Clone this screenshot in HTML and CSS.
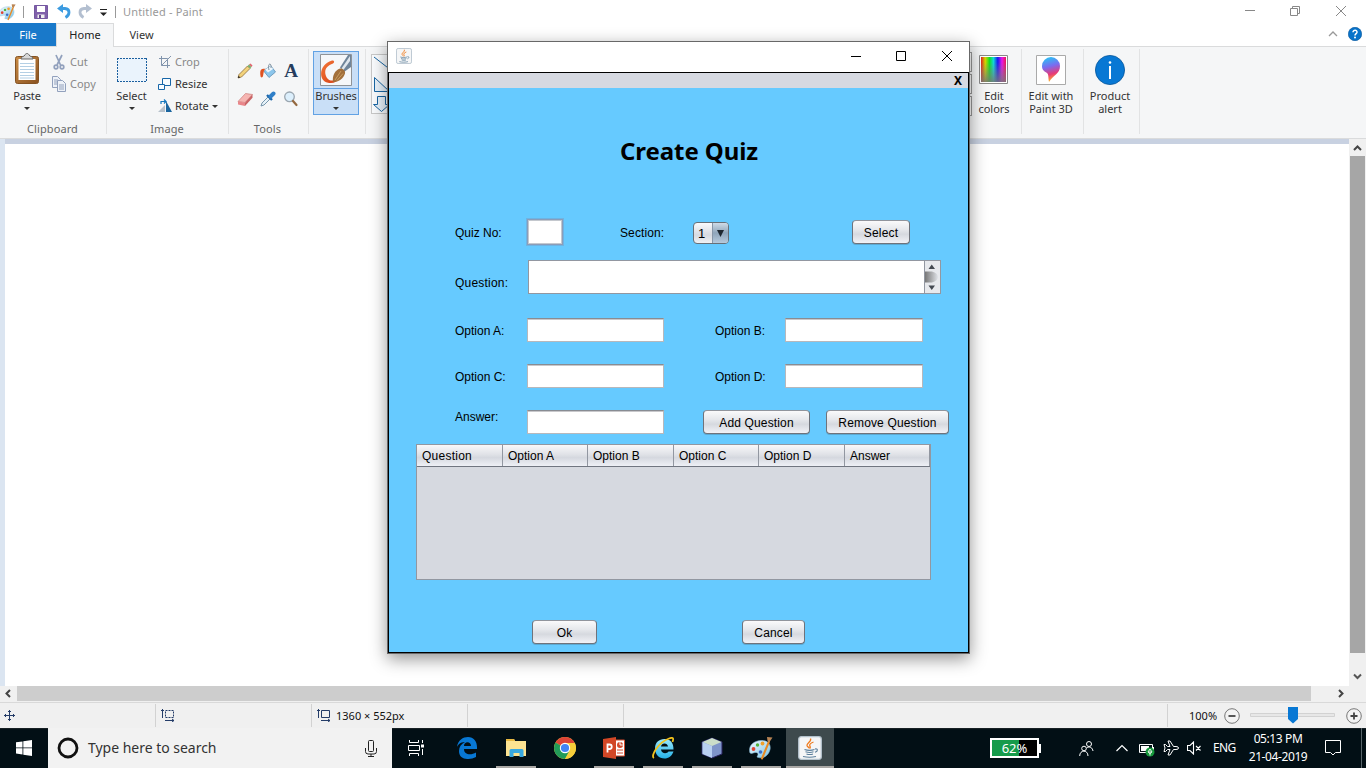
FILE: index.html
```html
<!DOCTYPE html>
<html lang="en">
<head>
<meta charset="utf-8">
<title>Untitled - Paint</title>
<link rel="stylesheet" href="styles.css">
</head>
<body>
<svg width="0" height="0" class="defs">
  <defs>
    <linearGradient id="board" x1="0" y1="0" x2="1" y2="1"><stop offset="0" stop-color="#c98b45"/><stop offset="1" stop-color="#8a5220"/></linearGradient>
    <linearGradient id="hue"><stop offset="0" stop-color="#e02020"/><stop offset=".17" stop-color="#d8d800"/><stop offset=".34" stop-color="#10e020"/><stop offset=".5" stop-color="#10d8d8"/><stop offset=".67" stop-color="#1818f0"/><stop offset=".84" stop-color="#e818e8"/><stop offset="1" stop-color="#e81850"/></linearGradient>
    <linearGradient id="fade" x1="0" y1="0" x2="0" y2="1"><stop offset=".2" stop-color="#808080" stop-opacity="0"/><stop offset="1" stop-color="#777" stop-opacity=".85"/></linearGradient>
    <linearGradient id="pin" x1=".3" y1="0" x2=".5" y2="1"><stop offset="0" stop-color="#27c5f5"/><stop offset=".38" stop-color="#7a6cf0"/><stop offset=".7" stop-color="#e83a78"/><stop offset="1" stop-color="#ffc020"/></linearGradient>
    <linearGradient id="paintred" x1="0" y1="0" x2="1" y2="1"><stop offset="0" stop-color="#f47a3a"/><stop offset="1" stop-color="#d43c12"/></linearGradient>
    <linearGradient id="sky" x1="0" y1="0" x2="1" y2="1"><stop offset="0" stop-color="#f2faff"/><stop offset="1" stop-color="#7cc4e6"/></linearGradient>
    <linearGradient id="ie" x1="0" y1="0" x2="0" y2="1"><stop offset="0" stop-color="#9be8fb"/><stop offset="1" stop-color="#25b2e8"/></linearGradient>
    <symbol id="palette" viewBox="0 0 24 24">
      <path d="M1 17C-1 10 4 5 12 4.500c7-.5 10 4 9 9-2 8-9 9.500-13 7.500 2-3 1-5-2-4.500-2 .4-3 1.500-5 .5z" fill="url(#sky)" stroke="#8fc0dc" stroke-width=".6"/>
      <circle cx="4.500" cy="13" r="1.900" fill="#e04534"/><circle cx="8.500" cy="9" r="1.700" fill="#54b43c"/><circle cx="13.500" cy="7.500" r="1.900" fill="#f0a02c"/><circle cx="11.500" cy="16" r="1.800" fill="#3c6cc8"/>
      <path d="M20 5.500L13 22.500" stroke="#e98a24" stroke-width="2" stroke-linecap="round"/><path d="M18 1l5.500.500L20.500 6 18.500 5z" fill="#b98555"/>
    </symbol>
    <symbol id="java" viewBox="0 0 24 24">
      <rect x=".7" y=".7" width="22.600" height="22.600" rx="2.500" fill="#f5f6f7" stroke="#b4c2cc" stroke-width="1.300"/>
      <path d="M12.500 2.500c1.500 3-4 4.500-3.500 7 .3 1.200 2 2 2.500 3M15.500 6c-3 1-4.200 2.500-3.700 4 .8 1 .8 1.500.2 2.500" fill="none" stroke="#ef7b1e" stroke-width="1.300"/>
      <path d="M6.500 13.500c3 1 7 1 10 0M7.500 15.800c3 .9 5.500.9 8 0M8.500 18c2 .7 4.500.7 6.500 0M5 20.500c4 1 9 1 13 0M17 13c3-.6 3.300 2.200 0 3.300" fill="none" stroke="#5c7f9b" stroke-width="1.100"/>
    </symbol>
  </defs>
</svg>

<div class="paint">
  <header class="titlebar">
    <svg class="app-icon" width="17" height="18"><use href="#palette"/></svg>
    <i class="bar"></i>
    <svg class="save" width="14" height="14" viewBox="0 0 14 14"><path d="M.5.5h13v13H.5z" fill="#8060aa" stroke="#7457a0"/><path d="M3 1h8v6H3z" fill="#fff"/><path d="M3.500 9.500h7V13h-7z" fill="#eee"/><path d="M5 10h2v3H5z" fill="#62478e"/></svg>
    <svg class="undo" width="14" height="15" viewBox="0 0 14 15"><path d="M2.500 4.500H8c5.500.5 5 6.500.500 9" fill="none" stroke="#3c9be0" stroke-width="2.800"/><path d="M0 4.500L6 0v9z" fill="#3c9be0"/></svg>
    <svg class="redo" width="14" height="15" viewBox="0 0 14 15"><path d="M11.500 4.500H6C.500 5 1 11 5.500 13.500" fill="none" stroke="#b3bfd0" stroke-width="2.800"/><path d="M14 4.500L8 0v9z" fill="#b3bfd0"/></svg>
    <svg class="more" width="7" height="8" viewBox="0 0 7 8"><path d="M0 .5h7" stroke="#222"/><path d="M0 3.500h7L3.500 7z" fill="#222"/></svg>
    <i class="bar"></i>
    <span class="doc-title">Untitled - Paint</span>
    <svg class="controls" width="104" height="12" viewBox="0 0 104 12" fill="none" stroke="#888"><path d="M1 5.500h10M46.500 3.500h7v7h-7zM48.500 3.500v-2h7v7h-2M92 1l10 10M102 1L92 11"/></svg>
  </header>
  <nav class="tabs">
    <span class="tab file">File</span><span class="tab home">Home</span><span class="tab view">View</span>
    <svg class="collapse" width="10" height="6" viewBox="0 0 10 6"><path d="M1 5l4-4 4 4" fill="none" stroke="#999" stroke-width="1.300"/></svg>
    <svg class="help" width="14" height="14" viewBox="0 0 14 14"><circle cx="7" cy="7" r="6.700" fill="#0873ca" stroke="#045298" stroke-width=".6"/><path d="M5 5.300C5 2.500 9.200 2.700 9 5.200 8.900 6.600 7 6.800 7 8.500" fill="none" stroke="#fff" stroke-width="1.500"/><circle cx="7" cy="10.500" r="1" fill="#fff"/></svg>
  </nav>

  <section class="ribbon">
    <div class="group clipboard">
      <div class="tools-row">
        <div class="big paste">
          <svg width="26" height="32" viewBox="0 0 26 32"><rect x="1.500" y="3.500" width="23" height="27" rx="2" fill="url(#board)" stroke="#855323"/><path d="M4.500 6h17v21h-17z" fill="#fff"/><path d="M6 10.500h14M6 13.500h14M6 16.500h14M6 19.500h14M6 22.500h14M6 25h14" stroke="#b4cfe4"/><path d="M7 6c0-3 3-2 4-4 .5-2 3.500-2 4 0 1 2 4 1 4 4z" fill="#d8d8d8" stroke="#666"/></svg>
          <span>Paste</span><i class="drop"></i>
        </div>
        <div class="stack muted clip-stack">
          <div><svg width="16" height="16" viewBox="0 0 16 16" fill="none" stroke="#92a1bd" stroke-width="1.700"><path d="M5 1l4.500 10M11 1L6 11"/><circle cx="5" cy="13" r="1.800"/><circle cx="11" cy="13" r="1.800"/></svg><span>Cut</span></div>
          <div><svg width="16" height="16" viewBox="0 0 16 16" fill="#eef2f8" stroke="#92a1bd"><path d="M1.500.5h5l3 3v8h-8zM3 4h4M3 6h5M3 8h5"/><path d="M6.500 4.500h5l3 3v8h-8zM8 9h5M8 11h5M8 13h5"/></svg><span>Copy</span></div>
        </div>
      </div>
      <div class="group-label">Clipboard</div>
    </div>
    <div class="group image">
      <div class="tools-row">
        <div class="big select-tool">
          <svg width="30" height="32" viewBox="0 0 30 32"><rect x=".5" y="5.500" width="29" height="23" fill="#eaf3fc"/><path d="M0 5.500h30M0 28.500h30M.5 5v24M29.500 5v24" stroke="#1b5f9f" stroke-dasharray="2 1"/></svg>
          <span>Select</span><i class="drop"></i>
        </div>
        <div class="stack image-stack">
          <div class="muted"><svg width="14" height="14" viewBox="0 0 14 14" fill="none" stroke="#8295ad"><path d="M3.500 1v9.500H12M1 3.500h8.500V13M3.500 10.500L13 1"/></svg><span>Crop</span></div>
          <div><svg width="14" height="14" viewBox="0 0 14 14" fill="#f6fbff" stroke="#1766a8"><path d="M4.500 1.500h8v7h-8z"/><path d="M.5 7.500h6v5h-6z"/></svg><span>Resize</span></div>
          <div class="rotate"><svg width="15" height="14" viewBox="0 0 15 14"><path d="M0 13L7 6v7z" fill="#b7c1cb"/><path d="M8 2l6 11H8z" fill="#1a659f"/><path d="M3 5V2.500h4.500M6 .500l2 2-2 2" fill="none" stroke="#1477be" stroke-width="1.200"/></svg><span>Rotate</span><i class="drop side"></i></div>
        </div>
      </div>
      <div class="group-label">Image</div>
    </div>
    <div class="group tools">
      <div class="tool-grid">
        <svg viewBox="0 0 16 16"><path d="M1 15l1-3.500L10.500 3l2.500 2.500L4.500 14z" fill="#f2d27a" stroke="#8b6b3a" stroke-width=".8"/><path d="M12 1.500L13.500.500 15.500 2.500 14.500 4z" fill="#e2636c"/><path d="M10.500 3l1.500-1.500L14.500 4 13 5.500z" fill="#79b06c"/><path d="M1 15l.6-2.200L3.200 14.400z" fill="#222"/></svg>
        <svg viewBox="0 0 16 16"><path d="M5 6.500L11 3l4.500 6L9 14.500 4.500 9z" fill="#8cc6ec" stroke="#5f8fb4" stroke-width=".8"/><path d="M5 6.500L11 3l2 3-5 3.500z" fill="#eef7fd"/><path d="M9 7C7-.5 12-.5 11 5" fill="none" stroke="#5f7587" stroke-width=".8"/><path d="M.5 13C-.5 7 1 5 5.500 6 3 7 3.800 13 2.500 14 1.500 15 .5 14 .5 13z" fill="#df5322"/></svg>
        <span class="letter-a">A</span>
        <svg viewBox="0 0 16 16"><path d="M1 10.500L8.500 2.500 15.500 3.500 8 11.500z" fill="#f6b5b2" stroke="#cc7c7a" stroke-width=".7"/><path d="M1 10.500l7 1v3.500L1 13.500z" fill="#e9868a"/><path d="M8 11.500l7.500-8v3.200L8 15z" fill="#c96466"/></svg>
        <svg viewBox="0 0 16 16"><path d="M1 15l1-3 6-6 2 2-6 6z" fill="#e6f1f8" stroke="#6a8ca4" stroke-width=".9"/><path d="M7 4l5 5M9.500 6.500L13 3" stroke="#1a66ab" stroke-width="2.400"/><path d="M10.500 5.500L13.500 2.500" stroke="#2f7fc8" stroke-width="4" stroke-linecap="round"/></svg>
        <svg viewBox="0 0 16 16"><circle cx="6.500" cy="5.800" r="4.800" fill="#dceffc" stroke="#9aa6b0" stroke-width="1.300"/><path d="M10 10l3.500 4" stroke="#94683f" stroke-width="2.200" stroke-linecap="round"/></svg>
      </div>
      <div class="group-label">Tools</div>
    </div>
    <div class="group brushes">
      <div class="brush-button">
        <div class="brush-art"><svg width="32" height="32" viewBox="0 0 32 32"><path d="M.5.5h31v31H.5z" fill="#f5f7f9" stroke="#8f9397"/><path d="M12 6.500C-1 10-2 26 7 28.500c6 1.500 10-.5 12-3.500-6 2.500-10 2-12-1C3 17 6 12 13 9.500 15 8 14 6 12 6.500z" fill="url(#paintred)"/><path d="M20 13.500L28 1h3v12l-7 5z" fill="#6f859a"/><path d="M21.500 14.500L30 2v5l-7 9.500z" fill="#dfe7ee"/><path d="M13 28c-1-6 2-12 7-13.500 3 0 5.500 2 5 5-1.500 5-6.500 8.500-12 8.500z" fill="#a2703c"/><path d="M15 26l6-9M17 26.500l6-7" stroke="#c99e62"/></svg></div>
        <span>Brushes</span><i class="drop"></i>
      </div>
    </div>
    <div class="group shapes">
      <div class="shape-box"><svg width="48" height="60" viewBox="0 0 48 60" fill="#e7f2fb" stroke="#1866a4"><path d="M2 2l18 14M2.500 22.500v14h15zM5.500 41.500h8v8h4l-8 7-8-7h4z"/></svg></div>
    </div>
    <div class="group colors">
      <div class="swatches"><i></i><i></i><i></i></div>
      <div class="wide-button"><svg width="30" height="32" viewBox="0 0 30 32"><path d="M.5 1.500h28v28H.5z" fill="#fff" stroke="#888"/><path d="M2 3h25v25H2z" fill="url(#hue)"/><path d="M2 3h25v25H2z" fill="url(#fade)"/></svg><span>Edit<br>colors</span></div>
    </div>
    <div class="group three-d">
      <div class="wide-button"><svg width="30" height="32" viewBox="0 0 30 32"><path d="M.5 1.500h29v29H.5z" fill="#fff" stroke="#aaa"/><path d="M6 12a9 9 0 0 1 18 0c0 8-7 9-11 16-1-5 0-7-2-9-3-2-5-3-5-7z" fill="url(#pin)"/></svg><span>Edit with<br>Paint 3D</span></div>
    </div>
    <div class="group alert">
      <div class="wide-button"><svg width="30" height="32" viewBox="0 0 30 32"><circle cx="15" cy="16" r="14.600" fill="#0878d4" stroke="#06569b" stroke-width=".8"/><path d="M15 12v13" stroke="#fff" stroke-width="2"/><circle cx="15" cy="8.500" r="1.300" fill="#fff"/></svg><span>Product<br>alert</span></div>
    </div>
  </section>

  <main class="workspace">
    <div class="canvas"></div>
    <div class="vscroll"><svg width="16" height="17" viewBox="0 0 16 17"><path d="M4 11l3.500-3.500L11 11" fill="none" stroke="#444" stroke-width="2"/></svg><div class="vthumb"></div><svg width="16" height="17" viewBox="0 0 16 17"><path d="M4 7.500L7.500 11 11 7.500" fill="none" stroke="#555" stroke-width="2"/></svg></div>
  </main>
  <div class="hscroll"><svg width="17" height="16" viewBox="0 0 17 16"><path d="M10 4L6.500 7.500 10 11" fill="none" stroke="#444" stroke-width="2"/></svg><div class="hthumb"></div><svg width="17" height="16" viewBox="0 0 17 16"><path d="M8 4l3.500 3.500L8 11" fill="none" stroke="#444" stroke-width="2"/></svg></div>
  <footer class="status">
    <div class="cell"><svg width="11" height="11" viewBox="0 0 11 11" fill="none" stroke="#243c68"><path d="M5.500 0v11M0 5.500h11M4 2l1.500-1.500L7 2M4 9l1.500 1.500L7 9M2 4L.5 5.500 2 7M9 4l1.500 1.500L9 7"/></svg></div>
    <div class="cell"><svg width="14" height="13" viewBox="0 0 14 13" fill="none" stroke="#243c68"><path d="M4.500 1.500h8v7h-8z" stroke-dasharray="2 1"/><path d="M1.500 0v9M0 2L1.500.5 3 2M4 11.500h9M11 10l2 1.500-2 1.500"/></svg></div>
    <div class="cell"><svg width="14" height="13" viewBox="0 0 14 13" fill="none" stroke="#243c68"><path d="M4.500 1.500h8v7h-8z"/><path d="M1.500 0v9M0 2L1.500.5 3 2M4 11.500h9M11 10l2 1.500-2 1.500"/></svg><span>1360 × 552px</span></div>
    <div class="cell"></div>
    <div class="cell rest"></div>
    <div class="zoom"><span>100%</span><svg width="16" height="16" viewBox="0 0 16 16"><circle cx="8" cy="8" r="7.300" fill="#f3f3f3" stroke="#777"/><path d="M4.500 8h7" stroke="#444" stroke-width="1.800"/></svg>
      <svg class="slider" width="86" height="17" viewBox="0 0 86 17"><path d="M.5 6.500h84v3H.5z" fill="#e7e7e7" stroke="#d2d2d2"/><path d="M38 0h10v12l-5 4.500-5-4.500z" fill="#0878d4"/></svg>
      <svg width="16" height="16" viewBox="0 0 16 16"><circle cx="8" cy="8" r="7.300" fill="#f3f3f3" stroke="#777"/><path d="M4.500 8h7M8 4.500v7" stroke="#444" stroke-width="1.800"/></svg></div>
  </footer>
</div>

<div class="dialog">
  <div class="dialog-title"><svg width="16" height="16"><use href="#java"/></svg><svg width="102" height="12" viewBox="0 0 102 12" fill="none" stroke="#000"><path d="M1 6.500h10M46.500 1.500h9v9h-9zM92 1l10 10M102 1L92 11"/></svg></div>
  <div class="dialog-frame">
    <div class="menu-bar">X</div>
    <h1>Create Quiz</h1>
    <div class="row quiz-row"><label class="first">Quiz No:</label><div class="field small"></div><label class="section">Section:</label><div class="combo"><span>1</span><b><svg width="7" height="7" viewBox="0 0 7 7"><path d="M0 0h7L3.500 7z" fill="#1e2730"/></svg></b></div><button class="btn select-btn">Select</button></div>
    <div class="row question-row"><label class="first">Question:</label><div class="textarea"><svg width="16" height="32" viewBox="0 0 16 32"><defs><linearGradient id="thumb"><stop offset="0" stop-color="#777"/><stop offset="1" stop-color="#e0e3e8"/></linearGradient></defs><path d="M0 0h16v32H0z" fill="#e7e9ed"/><path d="M.5 0v32" stroke="#9297a1"/><path d="M1 10.500h7c4 1 6 3 6 5.500s-2 4.500-6 5.500H1z" fill="url(#thumb)"/><path d="M4.500 8h6.500L7.750 3.500zM4.500 24.500h6.500L7.750 29z" fill="#444a52"/></svg></div></div>
    <div class="row option-row"><label class="first">Option A:</label><div class="field"></div><label class="second">Option B:</label><div class="field wide"></div></div>
    <div class="row option-row next"><label class="first">Option C:</label><div class="field"></div><label class="second">Option D:</label><div class="field wide"></div></div>
    <div class="row answer-row"><label class="first">Answer:</label><div class="field"></div><button class="btn add">Add Question</button><button class="btn remove">Remove Question</button></div>
    <div class="table"><div class="thead"><span>Question</span><span>Option A</span><span>Option B</span><span>Option C</span><span>Option D</span><span>Answer</span></div></div>
    <div class="actions"><button class="btn ok">Ok</button><button class="btn cancel">Cancel</button></div>
  </div>
</div>

<div class="taskbar">
  <div class="start"><svg width="16" height="16" viewBox="0 0 16 16" fill="#fff"><path d="M0 2.300L6.500 1.400v6.100H0zM7.300 1.300L16 0v7.500H7.300zM0 8.300h6.500v6.200L0 13.600zM7.300 8.300H16V16l-8.700-1.300z"/></svg></div>
  <div class="search"><svg width="22" height="22" viewBox="0 0 22 22"><circle cx="11" cy="11" r="9" fill="none" stroke="#111" stroke-width="2.800"/></svg><span>Type here to search</span><svg width="12" height="17" viewBox="0 0 12 17" fill="none" stroke="#222"><rect x="3.500" y=".5" width="5" height="11" rx="1"/><path d="M.5 8v3.500q0 2.500 2.500 2.500h6q2.500 0 2.500-2.500V8M6 14v2.500M3 16.500h6"/></svg></div>
  <div class="apps">
    <div class="app taskview"><svg width="17" height="16" viewBox="0 0 17 16" fill="none" stroke="#fff"><path d="M1.500 0v2.500h9V0M.5 5.500h11v5H.5zM1.500 16v-2.500h9V16M14.500 0v3M14.500 9v6"/><path d="M13 4.500h3v3h-3z" fill="#fff" stroke="none"/></svg></div>
    <div class="app"><svg width="22" height="22" viewBox="0 0 22 22"><path d="M1 10C2 3 7 0 12 0c6 0 9.500 5 9 12H8c0 6 7 6.500 12 3.500V20C13 23.500 3 23 3 14c0-4 2-7 6-9-5 0-7 3-8 5zm7-1h7c0-5-7-5-7 0z" fill="#0878d4"/></svg></div>
    <div class="app open"><svg width="22" height="20" viewBox="0 0 22 20"><path d="M1 1h8l1 2h11v15H1z" fill="#fce391"/><path d="M1 1h8l1 2H1z" fill="#e9ba43"/><path d="M4.500 19v-6.500q0-1.500 1.500-1.500h11q1.500 0 1.500 1.500V19h-4v-4h-6v4z" fill="#38a8df"/></svg></div>
    <div class="app"><svg width="22" height="22" viewBox="0 0 22 22"><circle cx="11" cy="11" r="11" fill="#f7ce3a"/><path d="M11 11L1.500 5.500a11 11 0 0 1 19 0z" fill="#dc4437"/><path d="M1.500 5.500A11 11 0 0 0 11 22l4.500-8.500L11 11z" fill="#229b58"/><path d="M11 6h9.800A11 11 0 0 1 11 22l5-8z" fill="#f7ce3a"/><circle cx="11" cy="11" r="5.200" fill="#fff"/><circle cx="11" cy="11" r="4.100" fill="#4284f4"/></svg></div>
    <div class="app open"><svg width="22" height="22" viewBox="0 0 22 22"><path d="M12 3h9.500v16H12z" fill="#fff" stroke="#d24b2c"/><path d="M14 13h6M14 16h6" stroke="#d24b2c"/><circle cx="17" cy="8" r="3" fill="#d24b2c"/><path d="M17 8V4.500M17 8h3.500" stroke="#fff"/><path d="M0 2l13-2v22L0 20z" fill="#d24726"/><path d="M4.500 15.500V7.500h2c3 0 3 4.500 0 4.500h-2" fill="none" stroke="#fff" stroke-width="1.800"/></svg></div>
    <div class="app open"><svg width="23" height="22" viewBox="0 0 23 22"><path d="M3 11.500C3 5.500 7 2 12.500 2c6 0 9 4 9 10.500H9c.5 4.500 6 4.500 7.500 2h5c-1.500 4.500-5 7-9 7-5.500 0-9.500-4-9.500-10zM9 9.500h7c-.5-4-6.500-4-7 0z" fill="url(#ie)"/><path d="M2 21C-2 19 7 5 17 1.500 21 0 22 1 20.500 5" fill="none" stroke="#f2c21c" stroke-width="1.800"/></svg></div>
    <div class="app open"><svg width="22" height="22" viewBox="0 0 22 22"><path d="M11 1l10 4v12l-10 4-10-4V5z" fill="#7e94c9" stroke="#29235f"/><path d="M1.500 5L11 1l9.500 4L11 9z" fill="#cbddc9"/><path d="M1.500 5L11 9v12l-9.500-4z" fill="#b8cff0"/></svg></div>
    <div class="app open"><svg width="24" height="24"><use href="#palette"/></svg></div>
    <div class="app open active"><svg width="24" height="24"><use href="#java"/></svg></div>
  </div>
  <div class="tray">
    <div class="battery"><i></i><span>62%</span></div>
    <svg class="people" width="15" height="15" viewBox="0 0 15 15" fill="none" stroke="#fff"><circle cx="10" cy="3" r="2.500"/><circle cx="5" cy="7.500" r="2.300"/><path d="M.7 15c0-6.500 8.300-6.500 8.300 0M7.500 7c3.500-2.500 6 0 6.500 3"/></svg>
    <svg class="up" width="12" height="8" viewBox="0 0 12 8"><path d="M.5 7L6 1.500 11.500 7" fill="none" stroke="#fff" stroke-width="1.200"/></svg>
    <svg class="power" width="16" height="14" viewBox="0 0 16 14"><path d="M.5 1.500h13v8H.5z" fill="none" stroke="#fff"/><path d="M2 3h8v5H2zM14 4h1v3h-1z" fill="#fff"/><circle cx="11" cy="9" r="4.500" fill="#16993c"/><path d="M11 12.500V8M9 9l2-3 2 3-2 1.500z" fill="none" stroke="#fff" stroke-width=".9"/></svg>
    <svg class="plane" width="16" height="16" viewBox="0 0 16 16"><path d="M1 4.500h1.500l2 2H7L5 1h2l3.500 5.500H13q2.500 0 2.500 1.500T13 9.500h-2.500L7 15H5l2-5.500H4.500l-2 2H1L2 8z" fill="none" stroke="#fff"/></svg>
    <svg class="sound" width="15" height="14" viewBox="0 0 15 14"><path d="M.5 4.500H3L6.500 1v12L3 9.500H.5zM9 5l4.500 4.500M13.500 5L9 9.500" fill="none" stroke="#fff" stroke-width="1.100"/></svg>
    <span class="lang">ENG</span>
    <div class="clock"><span>05:13 PM</span><span>21-04-2019</span></div>
    <svg class="notice" width="17" height="16" viewBox="0 0 17 16"><path d="M.5.500h15v12h-5l-2.500 2.500-2.500-2.500h-5z" fill="none" stroke="#fff"/></svg>
    <i class="peek"></i>
  </div>
</div>
</body>
</html>
```
FILE: styles.css
```css
* { box-sizing: border-box; }
body { margin: 0; width: 1366px; height: 768px; overflow: hidden; font: 11px/14px "Noto Sans", "Open Sans", sans-serif; color: #333; background: #fff; }
svg { display: block; flex: none; }
.defs { position: absolute; }
.paint { display: flex; flex-direction: column; height: 728px; }
.titlebar { display: flex; align-items: center; height: 23px; color: #999; }
.app-icon { margin-left: -1px; }
.bar { width: 1px; height: 12px; background: #999; margin-left: 7px; }
.save { margin-left: 10px; }
.undo { margin-left: 9px; }
.redo { margin-left: 7px; }
.more { margin-left: 8px; margin-top: 3px; }
.titlebar .bar + .doc-title { margin-left: 7px; font-size: 11px; letter-spacing: .18px; }
.more + .bar { margin-left: 8px; }
.controls { margin-left: auto; margin-right: 18px; margin-top: -2px; }
.tabs { display: flex; height: 24px; font-size: 11px; line-height: 23px; text-align: center; }
.file { width: 56px; height: 23px; background: #1979ca; color: #fff; }
.home { width: 58px; background: #f5f6f7; border: 1px solid #dadbdc; border-width: 1px 1px 0; line-height: 22px; color: #222; position: relative; z-index: 1; }
.view { width: 55px; }
.collapse { margin: 8px 10px 0 auto; }
.help { margin: 4px 4px 0 0; }
.ribbon { display: flex; height: 93px; margin-top: -1px; background: #f5f6f7; border: 1px solid #dadbdc; border-width: 1px 0; }
.group { position: relative; display: flex; flex-direction: column; height: 91px; border-right: 1px solid #e2e3e4; border-image: linear-gradient(transparent 3%, #e2e3e4 3%, #e2e3e4 95%, transparent 95%) 1; flex: none; }
.clipboard { width: 107px; }
.image { width: 122px; }
.tools { width: 80px; }
.brushes { width: 57px; }
.shapes { width: 500px; border: 0; }
.colors { width: 156px; flex-direction: row; justify-content: flex-end; }
.three-d { width: 62px; }
.alert { width: 56px; }
.tools-row { display: flex; height: 75px; }
.group-label { text-align: center; color: #666; letter-spacing: .1px; padding-right: 2px; }
.clipboard .group-label, .image .group-label { padding-right: 1px; }
.big { display: flex; flex-direction: column; align-items: center; padding-top: 6px; width: 40px; }
.paste { margin-left: 7px; }
.big span, .wide-button span { color: #333; }
.big span { margin-top: 4px; }
.paste span { letter-spacing: -.2px; }
.select-tool { margin-left: 5px; }
.select-tool span { margin-left: -1px; }
.drop { border: 3px solid transparent; border-top-color: #333; border-bottom: 0; margin-top: 4px; }
.rotate .side { margin: 0 0 0 1px; }
.stack { display: flex; flex-direction: column; padding-top: 4px; }
.stack div { height: 22px; display: flex; align-items: center; gap: 3px; }
.stack .rotate { gap: 2px; }
.clip-stack { margin-left: 4px; }
.image-stack { margin-left: 6px; }
.muted { color: #888; }
.tool-grid { display: grid; grid-template-columns: repeat(3, 16px); grid-template-rows: repeat(2, 16px); gap: 12px 7px; padding: 16px 8px 0 8px; height: 75px; }
.letter-a { font: bold 19px/16px "Liberation Serif", serif; color: #263d5e; text-align: center; }
.brush-button { width: 46px; height: 64px; margin: 4px 4px; background: #c9dff7; border: 1px solid #62a2e4; text-align: center; display: flex; flex-direction: column; align-items: center; }
.brush-art { align-self: stretch; height: 37px; border-bottom: 1px solid #62a2e4; padding: 2px 6px; }
.brush-button span { letter-spacing: -.1px; }
.brush-button .drop { margin-top: 4px; }
.shape-box { width: 60px; height: 60px; margin: 7px 5px; border: 1px solid #c8c8c8; background: #fafcfe; }
.swatches { display: flex; flex-direction: column; gap: 2px; padding: 5px 6px 0 0; }
.swatches i { width: 18px; height: 20px; border: 1px solid #999; background: #fff; }
.wide-button { display: flex; flex-direction: column; align-items: center; text-align: center; line-height: 13px; padding: 7px 3px 0 0; }
.wide-button span { margin-top: 3px; white-space: nowrap; }
.colors .wide-button { width: 32px; margin-right: 11px; padding-right: 0; }
.workspace { display: flex; height: 547px; background: #c8d1e1; }
.canvas { width: 1350px; border-style: solid; border-width: 0 1px 0 5px; border-color: #c8d1e1 #f0f0f0 #c8d1e1 #dbe5f1; background: linear-gradient(#c8d1e1 5px, #fff 5px); }
.vscroll { width: 16px; background: #f0f0f0; display: flex; flex-direction: column; }
.vthumb { height: 497px; width: 15px; background: #a6a6a6; }
.vscroll svg:last-child { margin-top: 14px; }
.hscroll { display: flex; height: 16px; background: #f0f0f0; }
.hthumb { width: 1294px; height: 15px; background: #cdcdcd; }
.hscroll svg:last-child { margin-left: 20px; }
.status { height: 26px; display: flex; align-items: center; border-top: 1px solid #d9d9d9; background: #f0f0f0; font-size: 11px; color: #111; }
.cell { width: 156px; height: 23px; border-right: 1px solid #d2d2d2; display: flex; align-items: center; padding-left: 5px; gap: 5px; }
.cell:first-child { padding-left: 4px; }
.rest { width: 544px; }
.zoom { margin-left: 21px; display: flex; align-items: center; gap: 7px; }
.slider { margin: 0 3px 0 3px; }
.dialog { position: absolute; left: 387px; top: 41px; width: 583px; height: 613px; border: 1px solid #686868; background: #fff; box-shadow: 0 5px 16px rgba(0,0,0,.42); }
.dialog-title { height: 30px; padding: 0 17px 0 8px; display: flex; justify-content: space-between; align-items: center; }
.dialog-title svg { margin-top: -2px; }
.dialog-frame { height: 581px; border: 1px solid #000; background: #66caff; font: 12px/14px "Liberation Sans", Arial, sans-serif; color: #000; overflow: hidden; }
.menu-bar { background: #d6d9e1; height: 15px; text-align: right; padding-right: 6px; font: bold 12px/15px "Noto Sans", sans-serif; }
h1 { margin: 46px 0 0 231px; font: bold 24px/34px "Noto Sans", sans-serif; letter-spacing: -.08px; white-space: nowrap; }
.row { display: flex; padding-left: 66px; align-items: center; }
label { padding-top: 2px; }
.first { width: 72px; }
.quiz-row { height: 26px; margin-top: 51px; }
.field { width: 137px; height: 24px; background: #fff; border: 1px solid #b7b8bc; border-top-color: #888c93; box-shadow: inset 0 1px #c8c8cb; }
.field.small { width: 36px; height: 26px; border: 1px solid #8b9db9; box-shadow: inset 0 0 0 1px #c4c8ce, 0 0 0 1px rgba(120,150,190,.45); }
.section { width: 73px; margin-left: 57px; letter-spacing: .1px; }
.combo { width: 36px; height: 22px; border: 1px solid #687078; border-radius: 4px; overflow: hidden; display: flex; background: linear-gradient(#fafafc, #d7dae1 60%, #eff1f5); margin-top: 2px; font-size: 13px; line-height: 21px; }
.combo span { width: 18px; padding-left: 4px; }
.combo b { width: 17px; border-left: 1px solid #8796a8; background: linear-gradient(#cfdbe7, #8fa5ba 50%, #b6cadd); display: flex; align-items: center; justify-content: center; }
.btn { font: 12px/14px "Liberation Sans", Arial, sans-serif; letter-spacing: .15px; padding: 2px 0 0; height: 24px; border: 1px solid #6f737b; border-top-color: #91959d; border-radius: 4px; color: #000; background: linear-gradient(#fafafb, #e5e7eb 40%, #d6d9df 60%, #f1f2f7); box-shadow: 0 1px rgba(60,70,80,.25); white-space: nowrap; }
.select-btn { width: 58px; margin-left: 123px; }
.question-row { height: 34px; margin-top: 15px; }
.question-row label { padding-top: 11px; letter-spacing: .2px; }
.textarea { width: 413px; height: 34px; background: #fff; border: 1px solid #9297a1; margin-left: 1px; display: flex; justify-content: flex-end; }
.option-row { height: 24px; margin-top: 24px; }
.option-row.next { margin-top: 22px; }
.second { width: 70px; margin-left: 51px; }
.field.wide { width: 138px; }
.answer-row { height: 24px; margin-top: 22px; }
.answer-row label { margin-top: -12px; }
.add { width: 107px; margin-left: 39px; }
.remove { width: 123px; margin-left: 16px; }
.table { width: 515px; height: 136px; margin: 10px 0 0 27px; border: 1px solid #9297a1; background: #d6d9e0; }
.thead { height: 22px; display: grid; grid-template-columns: 86px 85px 86px 85px 86px 85px; border-bottom: 1px solid #707580; background: linear-gradient(#f8f8fa, #e0e2e7 45%, #d5d8df 60%, #eef0f6); }
.thead span { border-right: 1px solid #9297a1; padding: 4px 0 0 5px; }
.thead span:first-child { letter-spacing: .25px; }
.actions { display: flex; margin-top: 40px; padding-left: 143px; }
.ok { width: 65px; }
.cancel { width: 63px; margin-left: 145px; }
.taskbar { height: 40px; display: flex; background: #020f15; color: #fff; border-top: 1px solid #172024; }
.start { width: 48px; height: 38px; display: flex; align-items: center; justify-content: center; }
.search { width: 344px; height: 40px; margin-top: -1px; background: #f2f2f2; color: #333; display: flex; align-items: center; padding: 0 15px 0 9px; font-size: 14px; }
.search span { margin: 0 auto 0 9px; letter-spacing: -.02px; }
.apps { display: flex; gap: 1px; margin: -1px 0 0 2px; width: 440px; }
.app { width: 48px; height: 40px; display: flex; align-items: center; justify-content: center; position: relative; flex: none; }
.taskview { padding-right: 4px; }
.open::after { content: ""; position: absolute; left: 4px; right: 4px; bottom: 0; height: 2px; background: #aaa8a5; }
.active { background: #3e4a4d; }
.active::after { left: 0; right: 0; }
.tray { display: flex; align-items: center; flex: 1; height: 38px; margin-left: 156px; }
.battery { position: relative; width: 49px; height: 20px; border: 2px solid #fff; background: linear-gradient(90deg, #169b4b 59%, #000 59%); text-align: center; font-size: 13px; line-height: 16px; flex: none; }
.battery i { position: absolute; right: -4px; top: 4px; width: 2px; height: 9px; background: #fff; }
.people { margin-left: 40px; }
.up { margin-left: 22px; }
.power { margin-left: 11px; margin-top: 3px; }
.plane { margin-left: 8px; }
.sound { margin-left: 8px; }
.lang { margin-left: 11px; font-size: 12px; letter-spacing: -.6px; width: 24px; }
.clock { margin-left: 8px; width: 66px; display: flex; flex-direction: column; align-items: center; font-size: 12px; line-height: 18px; letter-spacing: -.4px; white-space: nowrap; }
.notice { margin-left: 14px; }
.peek { width: 1px; height: 40px; background: #58656a; margin-left: auto; margin-right: 4px; }
```
